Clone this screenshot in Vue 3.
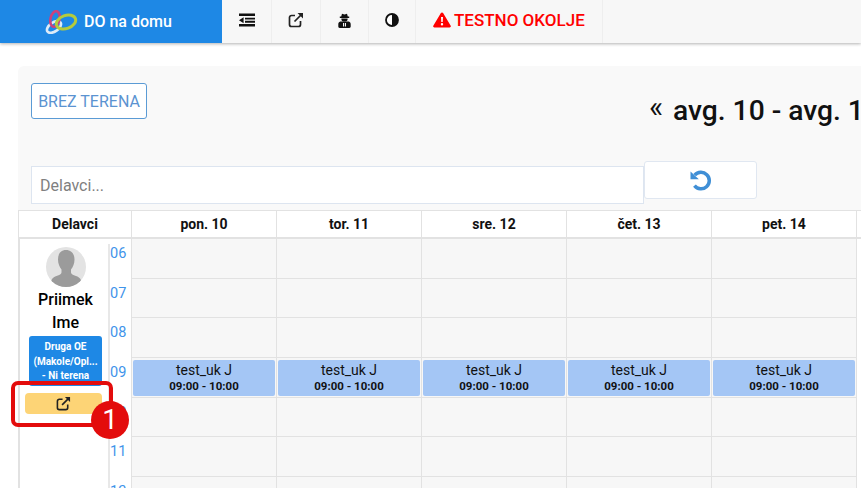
<template>
  <div class="page">
    <header class="topbar">
      <div class="brand">
        <svg class="logo" width="34" height="24" viewBox="0 0 34 24" fill="none">
          <ellipse cx="10" cy="17" rx="8" ry="4.5" transform="rotate(-35 10 17)" stroke="#dcebf8" stroke-width="2.6" />
          <ellipse cx="11" cy="9" rx="4.5" ry="8" transform="rotate(12 11 9)" stroke="#c9427e" stroke-width="2.6" />
          <ellipse cx="22" cy="12" rx="10" ry="6.5" transform="rotate(-20 22 12)" stroke="#b5cb3c" stroke-width="3" />
        </svg>
        <span>DO na domu</span>
      </div>
      <a class="nav-item w50">
        <svg width="16" height="14" viewBox="0 0 16 14" fill="#111">
          <path d="M0 .5h16v2.600H0zM6 4.700h10v1.900H6zM6 7.800h10v1.900H6zM0 11h16v2.600H0zM4.600 4.200v6L0 7.200z" />
        </svg>
      </a>
      <a class="nav-item w49">
        <svg width="16" height="16" viewBox="0 0 16 16" fill="none" stroke="#222" stroke-width="1.7">
          <path d="M12.500 9v3.500a2 2 0 0 1-2 2h-7a2 2 0 0 1-2-2v-7a2 2 0 0 1 2-2H7" />
          <path d="M6.500 9.500 14 2" />
          <path d="M9.500 1h5.500v5.500z" fill="#222" stroke="none" />
        </svg>
      </a>
      <a class="nav-item w48">
        <svg width="13" height="15" viewBox="0 0 13 15" fill="#111">
          <path d="M4 .8 6.500 1.400 9 .8l.8 2.800H11.200v1.300H1.800V3.600h1.400z" />
          <path d="M3.400 5.400h6.200v.8a3.100 2.300 0 0 1-6.200 0z" />
          <path d="M2.200 8.400h8.600c1.200.4 1.900 1.500 1.900 2.800v2.400c0 .8-.5 1.300-1.300 1.300H1.600c-.8 0-1.300-.5-1.300-1.300v-2.400c0-1.300.7-2.400 1.900-2.800z" />
          <path d="M5 10h1.100v3.400H5zM6.900 10H8v3.400H6.900z" fill="#f7f7f7" />
        </svg>
      </a>
      <a class="nav-item w47">
        <svg width="14" height="14" viewBox="0 0 14 14">
          <circle cx="7" cy="7" r="6" fill="#fff" stroke="#111" stroke-width="1.800" />
          <path d="M7 1a6 6 0 0 1 0 12z" fill="#111" />
        </svg>
      </a>
      <a class="nav-item warn">
        <svg width="18" height="16" viewBox="0 0 18 16">
          <path d="M9 .4c.5 0 .9.300 1.100.700l7.600 12.600c.4.800-.1 1.800-1.100 1.800H1.400c-1 0-1.500-1-1.100-1.800L7.900 1.100C8.100.7 8.500.4 9 .4z" fill="#f00" />
          <path d="M8 5h2l-.3 5H8.300zM9 11a1.200 1.200 0 1 1 0 2.400A1.200 1.200 0 0 1 9 11z" fill="#fff" />
        </svg>
        <span>TESTNO OKOLJE</span>
      </a>
    </header>

    <main class="content">
      <section class="panel">
        <button class="outline-btn">BREZ TERENA</button>
        <h2 class="range"><span class="chev">«</span><span class="range-text">avg. 10 - avg. 14, 2020</span></h2>
      </section>

      <div class="search-row">
        <input class="search" placeholder="Delavci..." />
        <button class="refresh">
          <svg width="24" height="24" viewBox="0 0 22 22" fill="none">
            <path d="M5.200 6.600A7.600 7.600 0 1 1 5 16.200" stroke="#3f8fd6" stroke-width="3.200" />
            <path d="M1.400 3.200 9 10.400H1.400z" fill="#3f8fd6" />
          </svg>
        </button>
      </div>

      <div class="calendar">
        <div class="cal-head">
          <div class="head-cell">Delavci</div>
          <div v-for="d in days" :key="d" class="head-cell">{{ d }}</div>
        </div>
        <div class="cal-body">
          <div class="worker">
            <div class="person">
              <svg class="avatar" width="40" height="40" viewBox="0 0 40 40">
                <clipPath id="av"><circle cx="20" cy="20" r="20" /></clipPath>
                <g clip-path="url(#av)">
                  <rect width="40" height="40" fill="#e3e3e3" />
                  <path d="M20 3c5.500 0 8.500 4 8.500 9.500 0 4-1.500 7.500-3.500 10v3c0 1.500 2 2.500 5 3.500 4 1.300 5.500 3.500 5.500 7.500V40H5v-3.500c0-4 1.500-6.200 5.500-7.500 3-1 5-2 5-3.500v-3c-2-2.500-3.500-6-3.500-10C12 7 14.500 3 20 3z" fill="#9b9b9b" />
                </g>
              </svg>
              <div class="name">Priimek<br />Ime</div>
              <div class="badge">Druga OE<br />(Makole/Opl...<br />- Ni terena</div>
              <button class="open-btn">
                <svg width="15" height="15" viewBox="0 0 16 16" fill="none" stroke="#222" stroke-width="1.700">
                  <path d="M12.500 9v3.500a2 2 0 0 1-2 2h-7a2 2 0 0 1-2-2v-7a2 2 0 0 1 2-2H7" />
                  <path d="M6.500 9.500 14 2" />
                  <path d="M9.500 1h5.500v5.500z" fill="#222" stroke="none" />
                </svg>
              </button>
            </div>
            <div class="hours">
              <div v-for="h in hours" :key="h" class="hour">{{ h }}</div>
            </div>
          </div>
          <div v-for="d in days" :key="d" class="day">
            <div v-for="h in hours" :key="h" class="slot">
              <div v-if="h === '09'" class="event">
                <div class="ev-title">test_uk J</div>
                <div class="ev-time">09:00 - 10:00</div>
              </div>
            </div>
          </div>
        </div>
      </div>
    </main>

    <div class="callout"></div>
    <div class="callout-num">1</div>
  </div>
</template>

<script setup>
const days = ['pon. 10', 'tor. 11', 'sre. 12', 'čet. 13', 'pet. 14']
const hours = ['06', '07', '08', '09', '10', '11', '12']
</script>

<style>
html,
body {
  margin: 0;
  overflow: hidden;
}
</style>

<style scoped>
.page {
  position: relative;
  width: 861px;
  height: 488px;
  overflow: hidden;
  background: #fff;
  font-family: Roboto, "Liberation Sans", sans-serif;
  color: #111;
}

.topbar {
  display: flex;
  height: 43px;
  background: #f7f7f7;
  box-shadow: 0 1px 3px rgba(0, 0, 0, 0.3);
}

.brand {
  width: 222px;
  box-sizing: border-box;
  padding-left: 44px;
  display: flex;
  align-items: center;
  gap: 6px;
  background: #1e88e5;
  color: #fff;
  font-size: 16px;
  font-weight: 500;
}

.nav-item {
  box-sizing: border-box;
  display: flex;
  align-items: center;
  justify-content: center;
  border-right: 1px solid #eee;
  padding-bottom: 3px;
}

.w50 { width: 50px; }
.w49 { width: 49px; }
.w48 { width: 48px; }
.w47 { width: 47px; }

.warn {
  width: 187px;
  justify-content: flex-start;
  gap: 3px;
  padding-left: 17px;
  color: #f00;
  font-size: 17px;
  font-weight: 500;
  white-space: nowrap;
}

.content {
  padding: 23px 0 0 18px;
}

.panel {
  display: flex;
  align-items: flex-start;
  height: 91px;
  box-sizing: border-box;
  padding: 17px 0 0 13px;
  background: #f9f9f9;
  border-radius: 6px 0 0 0;
  white-space: nowrap;
  overflow: hidden;
}

.outline-btn {
  flex: none;
  width: 116px;
  height: 36px;
  padding: 0;
  background: #fff;
  border: 1px solid #5b9bd5;
  border-radius: 3px;
  color: #5b93d1;
  font: 400 16px Roboto, sans-serif;
}

.range {
  display: flex;
  margin: 12px 0 0 502px;
  font-size: 28.200px;
  line-height: 32px;
  font-weight: 500;
  color: #111;
}

.chev {
  width: 24px;
  font-weight: 400;
  font-size: 30px;
  position: relative;
  top: -4px;
}

.search-row {
  display: flex;
  align-items: flex-start;
  height: 53px;
  padding: 4px 0 0 13px;
  box-sizing: border-box;
  background: #f9f9f9;
}

.search {
  width: 613px;
  height: 38px;
  margin-top: 5px;
  box-sizing: border-box;
  padding: 0 8px;
  background: #fff;
  border: 1px solid #dde5f0;
  font: 400 16px Roboto, sans-serif;
  color: #333;
  outline: none;
}

.search::placeholder {
  color: #808080;
}

.refresh {
  width: 113px;
  height: 38px;
  padding: 0;
  display: flex;
  align-items: center;
  justify-content: center;
  background: #fff;
  border: 1px solid #e0e7f1;
  border-radius: 3px;
}

.cal-head,
.cal-body {
  display: grid;
  grid-template-columns: 114px repeat(5, 145px) 145px;
}

.cal-head {
  height: 29px;
  box-sizing: border-box;
  border-top: 1px solid #e2e2e2;
  border-bottom: 2px solid #e2e2e2;
}

.head-cell {
  display: flex;
  align-items: center;
  justify-content: center;
  box-sizing: border-box;
  border-right: 1px solid #e2e2e2;
  font-size: 14px;
  font-weight: 700;
}

.head-cell:first-child {
  border-left: 1px solid #e2e2e2;
}

.worker {
  display: flex;
  box-sizing: border-box;
  height: 280px;
  border-left: 2px solid #e2e2e2;
  border-right: 1px solid #e2e2e2;
  background: #fff;
}

.person {
  width: 88px;
  box-sizing: border-box;
  padding-top: 8px;
  display: flex;
  flex-direction: column;
  align-items: center;
}

.avatar {
  display: block;
  margin-left: 4px;
}

.name {
  margin-top: 1px;
  margin-left: 3px;
  font-size: 16px;
  line-height: 23px;
  font-weight: 500;
  text-align: center;
  color: #000;
}

.badge {
  width: 73px;
  height: 50px;
  margin-top: 2px;
  margin-left: 3px;
  box-sizing: border-box;
  padding-top: 4px;
  background: #1e88e5;
  border-radius: 3px;
  color: #fff;
  font-size: 10px;
  line-height: 14.500px;
  font-weight: 700;
  text-align: center;
  white-space: nowrap;
}

.open-btn {
  width: 77px;
  height: 21px;
  margin-top: 7px;
  margin-left: -1px;
  padding: 0;
  display: flex;
  align-items: center;
  justify-content: center;
  background: #fdd476;
  border: none;
  border-radius: 4px;
}

.hours {
  flex: 1;
  margin-top: 5px;
  border-left: 2px solid #e8e8e8;
  box-sizing: border-box;
}

.hour {
  height: 39.670px;
  padding-top: 1px;
  box-sizing: border-box;
  color: #3f94ea;
  font-size: 14.500px;
  line-height: 17px;
}

.day {
  background: #f7f7f7;
  box-sizing: border-box;
  border-right: 1px solid #e2e2e2;
}

.slot {
  height: 39.670px;
  box-sizing: border-box;
  border-bottom: 1px solid #e2e2e2;
  padding: 2px 1px 1px;
}

.event {
  height: 100%;
  box-sizing: border-box;
  background: #a4c6f5;
  border-radius: 2px;
  text-align: center;
  padding-top: 2px;
}

.ev-title {
  font-size: 14px;
  line-height: 17px;
  color: #111;
}

.ev-time {
  font-size: 11.500px;
  line-height: 15px;
  font-weight: 700;
  color: #111;
}

.callout {
  position: absolute;
  left: 11px;
  top: 381px;
  width: 102px;
  height: 46px;
  box-sizing: border-box;
  border: 4px solid #e30c0c;
  border-radius: 7px;
}

.callout-num {
  position: absolute;
  left: 91px;
  top: 401px;
  width: 38px;
  height: 38px;
  border-radius: 50%;
  background: #e30c0c;
  color: #fff;
  font-size: 28px;
  line-height: 38px;
  text-align: center;
}
</style>
